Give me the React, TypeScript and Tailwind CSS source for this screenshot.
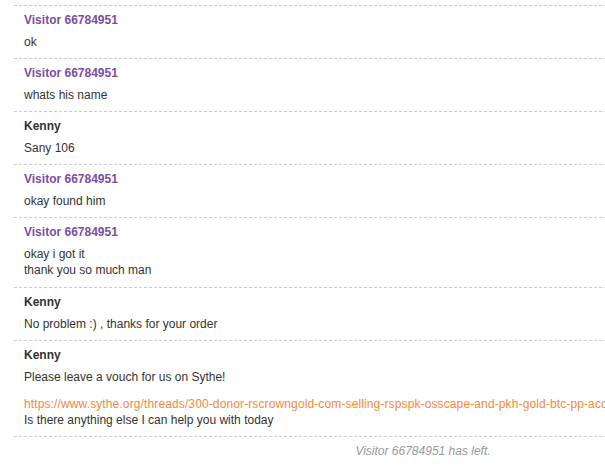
import React from "react";

const NAME = "Visitor 66784951";

function Block({ name, visitor, children, pb = "pb-2" }: { name: string; visitor: boolean; children: React.ReactNode; pb?: string }) {
  return (
    <div className={`border-t border-dashed border-[#cccccc] pl-[10px] pt-[6px] ${pb}`}>
      <div className={`font-bold leading-4 ${visitor ? "text-[#7a4ea3]" : "text-[#333333]"}`}>{name}</div>
      <div className="mt-[6px] leading-4 text-[#333333]">{children}</div>
    </div>
  );
}

export default function App() {
  return (
    <div className="w-[605px] h-[469px] overflow-hidden bg-white" style={{ fontFamily: '"Liberation Sans", Arial, sans-serif' }}>
      <div className="ml-[14px] mt-[5px] w-[818px] text-[12px]">
        <Block name={NAME} visitor>ok</Block>
        <Block name={NAME} visitor>whats his name</Block>
        <Block name="Kenny" visitor={false}>Sany 106</Block>
        <Block name={NAME} visitor>okay found him</Block>
        <Block name={NAME} visitor pb="pb-[9px]">
          <div>okay i got it</div>
          <div>thank you so much man</div>
        </Block>
        <Block name="Kenny" visitor={false}>No problem :) , thanks for your order</Block>
        <Block name="Kenny" visitor={false}>
          <div>Please leave a vouch for us on Sythe!</div>
          <div className="mt-[11px] whitespace-nowrap tracking-[0.12px] text-[#f5883b]">
            https://www.sythe.org/threads/300-donor-rscrowngold-com-selling-rspspk-osscape-and-pkh-gold-btc-pp-accepted/
          </div>
          <div>Is there anything else I can help you with today</div>
        </Block>
        <div className="border-t border-dashed border-[#cccccc] pt-[6px] text-center italic leading-4 text-[#999999]">
          {NAME} has left.
        </div>
      </div>
    </div>
  );
}
